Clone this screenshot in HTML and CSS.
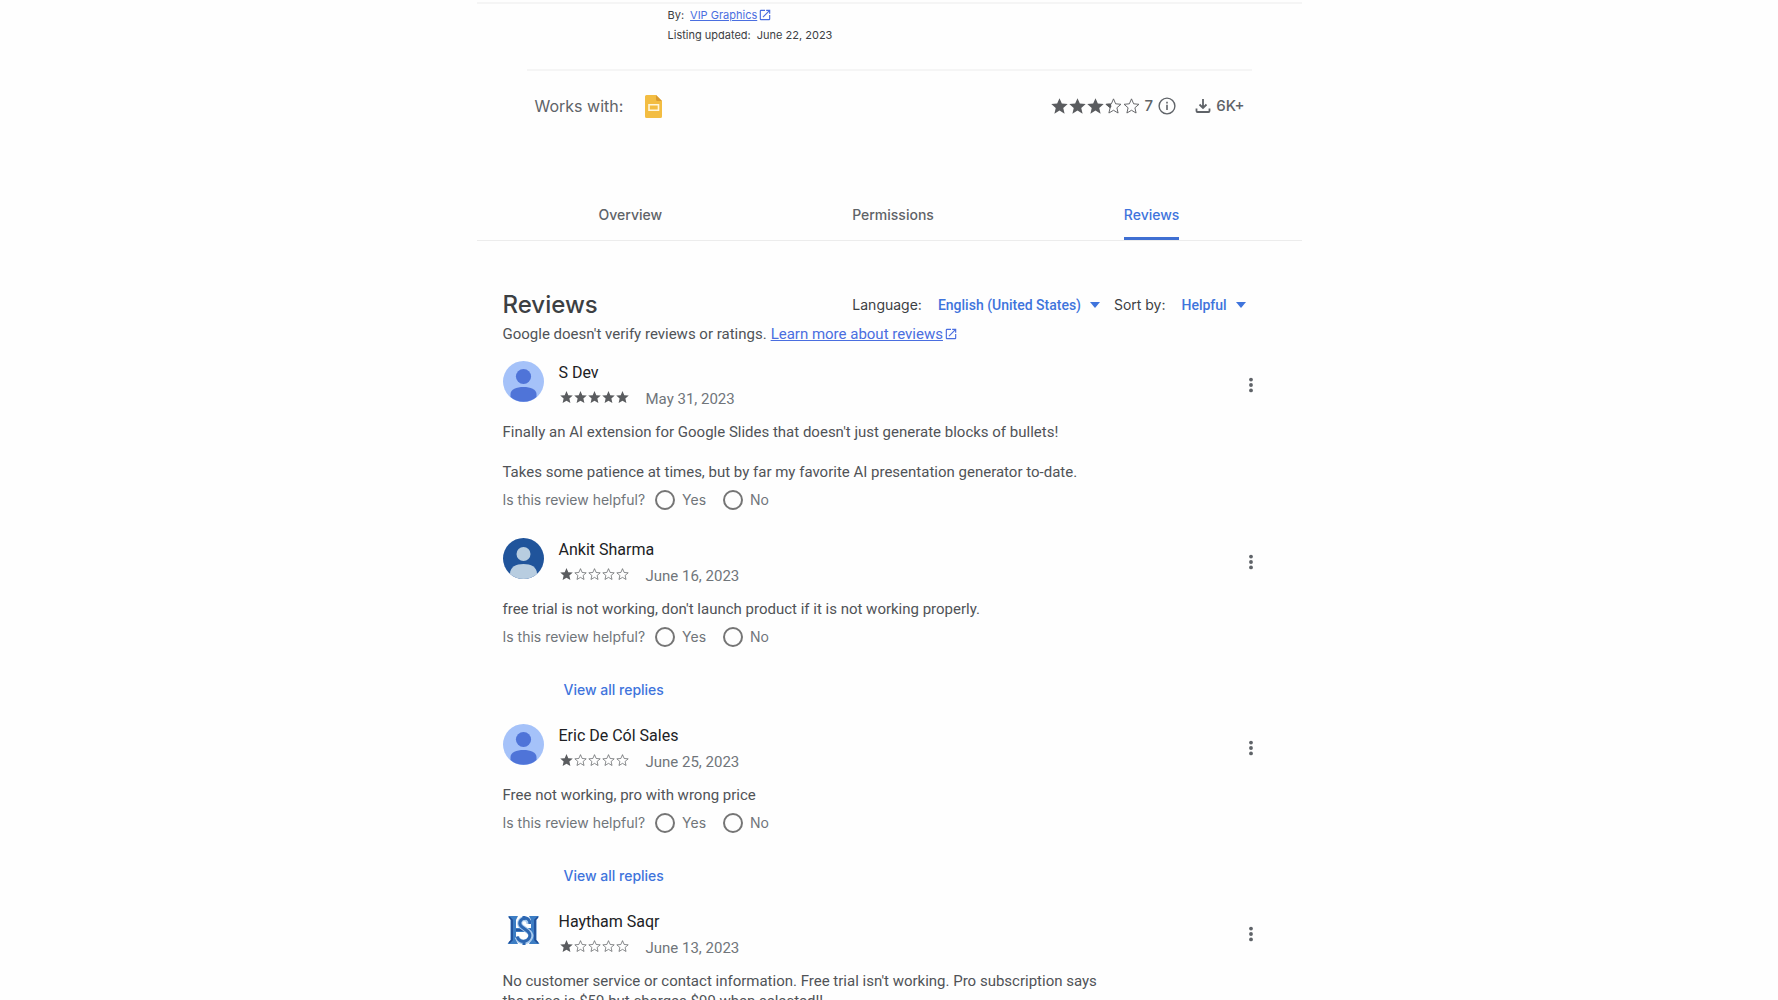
FILE: index.html
```html
<!DOCTYPE html>
<html lang="en">
<head>
<meta charset="utf-8">
<meta name="viewport" content="width=device-width, initial-scale=1">
<title>Reviews</title>
<link rel="stylesheet" href="styles.css">
</head>
<body>
<svg class="sprite" aria-hidden="true">
  <symbol id="star" viewBox="0 0 24 24"><path d="M12 17.8 19.2 22.2 17.3 14 23.6 8.5 15.3 7.8 12 .2 8.7 7.8 .4 8.5 6.7 14 4.8 22.2z"/></symbol>
  <symbol id="star-empty" viewBox="0 0 24 24"><path d="M12 17.300 18.500 21.200 16.800 13.800 22.500 8.900 15 8.200 12 1.200 9 8.200 1.500 8.900 7.200 13.800 5.500 21.200z" fill="none" stroke="currentColor" stroke-width="1.300"/></symbol>
  <symbol id="open" viewBox="0 0 24 24"><path d="M19 19H5V5h7V3H5a2 2 0 0 0-2 2v14a2 2 0 0 0 2 2h14a2 2 0 0 0 2-2v-7h-2zM14 3v2h3.600l-9.800 9.800 1.400 1.400L19 6.400V10h2V3z"/></symbol>
  <symbol id="dots" viewBox="0 0 24 24"><circle cx="12" cy="5.500" r="2.300"/><circle cx="12" cy="12" r="2.300"/><circle cx="12" cy="18.500" r="2.300"/></symbol>
  <symbol id="person" viewBox="0 0 41 41"><circle cx="20.500" cy="20.500" r="20.500" fill="#a5c2f9"/><circle cx="20.500" cy="15.500" r="7.600" fill="#4f74d8"/><path d="M7.500 36V33c0-4.500 6-7 13-7s13 2.500 13 7v3c-3.500 3-8 4.800-13 4.800S11 39 7.500 36z" fill="#4f74d8"/></symbol>
</svg>

<main class="page">
  <header class="summary">
    <div class="credits">
      <p>By: <span class="publisher"><a class="link" href="#publisher">VIP Graphics</a><svg class="open-icon"><use href="#open"/></svg></span></p>
      <p>Listing updated: <span>June 22, 2023</span></p>
    </div>
    <div class="facts">
      <span>Works with:</span>
      <svg class="slides" viewBox="0 0 17 23" role="img" aria-label="Google Slides"><path d="M1.500 0H11l6 6v15.500a1.500 1.500 0 0 1-1.500 1.500h-14A1.500 1.500 0 0 1 0 21.500v-20A1.500 1.500 0 0 1 1.500 0z" fill="#f3bd42"/><path d="M11 0l6 6h-4.500A1.500 1.500 0 0 1 11 4.500z" fill="#da9b2f"/><path d="M4 9.800h9.500v5.500H4z" fill="none" stroke="#fff6dc" stroke-width="1.600"/></svg>
      <div class="numbers">
        <span class="stars stars-large" role="img" aria-label="3.2 out of 5">
          <svg><use href="#star"/></svg><svg><use href="#star"/></svg><svg><use href="#star"/></svg><svg viewBox="0 0 24 24"><use href="#star-empty"/><path d="M5 8l3.500.3.500 4-1.500 2L.4 8.500z"/></svg><svg><use href="#star-empty"/></svg>
        </span>
        <span>7</span>
        <svg class="info" viewBox="0 0 18 18"><circle cx="9" cy="9" r="7.900" fill="none" stroke="currentColor" stroke-width="1.400"/><path d="M8.200 7.800h1.600v5.200H8.200zM8.200 4.800h1.600v1.600H8.200z"/></svg>
        <svg class="download" viewBox="0 0 16 16"><path d="M8 1v8.500M4.500 6.500 8 10l3.500-3.500M1.500 10.500V13a1 1 0 0 0 1 1h11a1 1 0 0 0 1-1v-2.500" fill="none" stroke="currentColor" stroke-width="1.800"/></svg>
        <span>6K+</span>
      </div>
    </div>
  </header>

  <nav class="tabs">
    <a href="#overview">Overview</a>
    <a href="#permissions">Permissions</a>
    <a class="active" href="#reviews" aria-current="page">Reviews</a>
  </nav>

  <section class="reviews" id="reviews">
    <div class="reviews-head">
      <h1>Reviews</h1>
      <div class="filters">
        <label for="language">Language:</label>
        <select id="language"><option>English (United States)</option></select>
        <svg class="arrow" viewBox="0 0 10 6"><path d="M0 0h10L5 6z"/></svg>
        <label for="sort">Sort by:</label>
        <select id="sort"><option>Helpful</option></select>
        <svg class="arrow" viewBox="0 0 10 6"><path d="M0 0h10L5 6z"/></svg>
      </div>
    </div>
    <p class="notice"><span>Google doesn't verify reviews or ratings.</span> <a class="link" href="#about-reviews">Learn more about reviews</a><svg class="open-icon"><use href="#open"/></svg></p>

    <article class="review">
      <div class="author">
        <svg class="avatar"><use href="#person"/></svg>
        <div class="who">
          <h2>S Dev</h2>
          <div class="meta">
            <span class="stars" role="img" aria-label="5 out of 5"><svg><use href="#star"/></svg><svg><use href="#star"/></svg><svg><use href="#star"/></svg><svg><use href="#star"/></svg><svg><use href="#star"/></svg></span>
            <time datetime="2023-05-31">May 31, 2023</time>
          </div>
        </div>
        <button class="more" aria-label="More options"><svg><use href="#dots"/></svg></button>
      </div>
      <p class="text">Finally an AI extension for Google Slides that doesn't just generate blocks of bullets!<br><br>Takes some patience at times, but by far my favorite AI presentation generator to-date.</p>
      <div class="helpful" role="group" aria-label="Is this review helpful?">
        <span>Is this review helpful?</span>
        <label><input type="radio" name="h1">Yes</label>
        <label><input type="radio" name="h1">No</label>
      </div>
    </article>

    <article class="review">
      <div class="author">
        <svg class="avatar" viewBox="0 0 41 41"><circle cx="20.500" cy="20.500" r="20.500" fill="#20549b"/><circle cx="20.500" cy="16" r="7" fill="#b8cde0"/><path d="M7 35.900C7 29 13 26 20.500 26S34 29 34 35.900A20.500 20.500 0 0 1 20.500 41 20.500 20.500 0 0 1 7 35.900z" fill="#b8cde0"/></svg>
        <div class="who">
          <h2>Ankit Sharma</h2>
          <div class="meta">
            <span class="stars" role="img" aria-label="1 out of 5"><svg><use href="#star"/></svg><svg><use href="#star-empty"/></svg><svg><use href="#star-empty"/></svg><svg><use href="#star-empty"/></svg><svg><use href="#star-empty"/></svg></span>
            <time datetime="2023-06-16">June 16, 2023</time>
          </div>
        </div>
        <button class="more" aria-label="More options"><svg><use href="#dots"/></svg></button>
      </div>
      <p class="text">free trial is not working, don't launch product if it is not working properly.</p>
      <div class="helpful" role="group" aria-label="Is this review helpful?">
        <span>Is this review helpful?</span>
        <label><input type="radio" name="h2">Yes</label>
        <label><input type="radio" name="h2">No</label>
      </div>
      <button class="replies">View all replies</button>
    </article>

    <article class="review">
      <div class="author">
        <svg class="avatar"><use href="#person"/></svg>
        <div class="who">
          <h2>Eric De Cól Sales</h2>
          <div class="meta">
            <span class="stars" role="img" aria-label="1 out of 5"><svg><use href="#star"/></svg><svg><use href="#star-empty"/></svg><svg><use href="#star-empty"/></svg><svg><use href="#star-empty"/></svg><svg><use href="#star-empty"/></svg></span>
            <time datetime="2023-06-25">June 25, 2023</time>
          </div>
        </div>
        <button class="more" aria-label="More options"><svg><use href="#dots"/></svg></button>
      </div>
      <p class="text">Free not working, pro with wrong price</p>
      <div class="helpful" role="group" aria-label="Is this review helpful?">
        <span>Is this review helpful?</span>
        <label><input type="radio" name="h3">Yes</label>
        <label><input type="radio" name="h3">No</label>
      </div>
      <button class="replies">View all replies</button>
    </article>

    <article class="review">
      <div class="author">
        <svg class="avatar" viewBox="0 0 41 41">
          <path d="M5 6h10l-2 4v8h15v-8l-2-4h10l-2.500 3v21l3 4H26l2-4v-8H13v8l2 4H4.500l3-4V9z" fill="#3c7dc4"/>
          <path d="M6 7l3 3v20l-3 3M35 7l-3 3v20l3 3M13 20h15" fill="none" stroke="#1d4a94" stroke-width="1.600"/>
          <path d="M26 14c0-4-3-6-6-5s-5 5-1 8l7 5c4 4 1 9-5 10-3 0-6-2-7-5" fill="none" stroke="#a9cbee" stroke-width="5"/>
          <path d="M27 14c0-5-4-7-7-5.500s-5 5.500-1 8.500l6 4.500c4 4 1 9-4 10-4 0-6-2-7-5M21 6v4M21 30v5" fill="none" stroke="#2d67b2" stroke-width="3"/>
        </svg>
        <div class="who">
          <h2>Haytham Saqr</h2>
          <div class="meta">
            <span class="stars" role="img" aria-label="1 out of 5"><svg><use href="#star"/></svg><svg><use href="#star-empty"/></svg><svg><use href="#star-empty"/></svg><svg><use href="#star-empty"/></svg><svg><use href="#star-empty"/></svg></span>
            <time datetime="2023-06-13">June 13, 2023</time>
          </div>
        </div>
        <button class="more" aria-label="More options"><svg><use href="#dots"/></svg></button>
      </div>
      <p class="text">No customer service or contact information. Free trial isn't working. Pro subscription says the price is $59 but charges $99 when selected!!</p>
    </article>
  </section>
</main>
</body>
</html>
```
FILE: styles.css
```css
* { box-sizing: border-box; }

html { scrollbar-width: none; }

body {
  margin: 0;
  background: #fefefe;
  color: #505357;
  font: 15px/20px Roboto, sans-serif;
}

h1, h2, p { margin: 0; font-weight: 400; }

svg { display: block; flex: none; fill: currentColor; }

button, select {
  margin: 0;
  padding: 0;
  border: 0;
  background: none;
  font: inherit;
  color: inherit;
}

.sprite { position: absolute; width: 0; height: 0; }

.page {
  max-width: 825px;
  margin: 0 auto;
  padding-top: 2px;
}

.summary {
  padding: 0 50px;
  border-top: 2px solid #f5f5f5;
}

.credits {
  padding: 1px 0 24px 141px;
  border-bottom: 2px solid #f5f5f5;
  color: #3c4043;
  font: 11px/20px Inter, sans-serif;
}

.credits p { display: flex; align-items: center; gap: 6px; }

.publisher { display: flex; align-items: center; gap: 1px; }

.link { color: #4a6ee0; text-decoration: underline; }

.open-icon { width: 14px; height: 14px; color: #4a6ee0; }

.facts {
  display: flex;
  align-items: center;
  gap: 22px;
  height: 70px;
  padding: 0 7px 0 8px;
  color: #5f6368;
  font: 16px/24px Inter, sans-serif;
}

.slides { width: 17px; height: 23px; }

.numbers { display: flex; align-items: center; gap: 5px; margin-left: auto; font-size: 15px; font-weight: 500; }

.info { width: 18px; height: 18px; }

.download { width: 16px; height: 16px; margin-left: 14px; }

.stars { display: flex; gap: 1px; color: #5a5c5f; }

.stars svg { width: 13px; height: 13px; }

.stars-large svg { width: 17px; height: 17px; }

.tabs {
  display: flex;
  justify-content: center;
  gap: 190px;
  margin-top: 52px;
  border-bottom: 1px solid #ececec;
  color: #5f6368;
  font: 500 14px/44px Inter, sans-serif;
}

.tabs a {
  color: inherit;
  text-decoration: none;
  border-bottom: 3px solid transparent;
}

.tabs .active { color: #3f74dc; border-color: #3f6fd2; }

.reviews { padding: 48px 41px 0 26px; }

.reviews-head { display: flex; align-items: center; justify-content: space-between; }

h1 { color: #3c4043; font: 500 24px/32px Inter, sans-serif; }

.filters {
  display: flex;
  align-items: center;
  padding-right: 15px;
  color: #3c4043;
  font: 14px/20px Inter, sans-serif;
}

.filters select {
  appearance: none;
  margin: 0 8px 0 16px;
  color: #3f74dc;
  font: 500 14px/20px Roboto, sans-serif;
}

.arrow { width: 10px; height: 6px; margin-right: 14px; color: #3f74dc; }

.arrow:last-child { margin-right: 0; }

.notice { display: flex; align-items: center; margin: 3px 0 17px; }

.notice span { margin-right: 4px; }

.notice .open-icon { margin-left: 1px; }

.review { display: flow-root; margin-bottom: 22px; }

.author { display: flex; align-items: flex-start; height: 41px; }

.avatar { width: 41px; height: 41px; margin-right: 15px; }

h2 { color: #202124; font-size: 16px; line-height: 24px; }

.meta { display: flex; align-items: center; gap: 17px; padding: 1px 0 0 1px; color: #70757a; }

.meta time { padding-top: 3px; }

.more { margin: 12px 0 0 auto; color: #5f6368; }

.more svg { width: 20px; height: 24px; }

.text { max-width: 600px; margin-top: 20px; }

.helpful {
  display: flex;
  align-items: center;
  height: 24px;
  margin: 6px 0 4px;
  color: #70757a;
  font: 14px/24px Inter, sans-serif;
}

.helpful label { display: flex; align-items: center; gap: 7px; margin-right: 7px; }

.helpful input {
  appearance: none;
  width: 20px;
  height: 20px;
  margin: 0 0 0 10px;
  border: 2px solid #757575;
  border-radius: 50%;
}

.helpful input:checked { box-shadow: inset 0 0 0 3px #fff; background: #3f74dc; }

.replies {
  display: block;
  margin: 29px 0 0 61px;
  color: #3f74dc;
  font: 500 14px/24px Inter, sans-serif;
}
```
